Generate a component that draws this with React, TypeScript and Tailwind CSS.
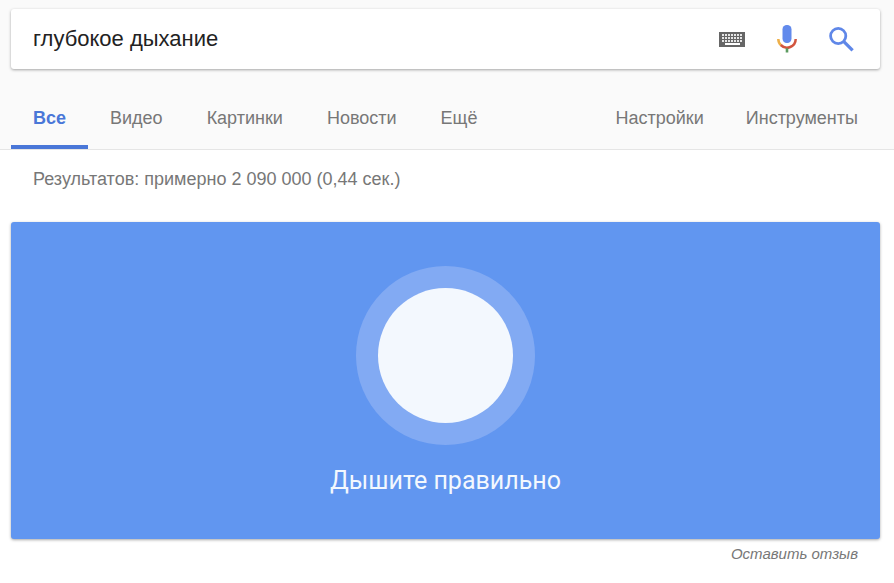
const tabs = ['Все', 'Видео', 'Картинки', 'Новости', 'Ещё']
const tools = ['Настройки', 'Инструменты']

function KeyboardIcon() {
  const columns = [3, 6, 9, 12, 15, 18, 21]

  return (
    <svg width="26" height="15" viewBox="0 0 26 15" aria-hidden="true">
      <rect width="26" height="15" fill="#666666" />
      {[2, 5, 8].map((y) =>
        columns.map((x) => <rect key={`${x}-${y}`} x={x} y={y} width="2" height="2" fill="#e6e6e6" />)
      )}
      <rect x="6" y="11" width="15" height="2" fill="#fff" />
    </svg>
  )
}

function MicIcon() {
  return (
    <svg width="20" height="28" viewBox="0 0 20 28" fill="none" aria-hidden="true">
      <rect x="5.5" y="0" width="9" height="18" rx="4.2" fill="#628aec" />
      <path d="M1.3 14a8.7 8.7 0 0 0 2.8 6.4" stroke="#eeb04a" strokeWidth="2.5" />
      <path d="M3.8 20A8.7 8.7 0 0 0 18.7 14" stroke="#d2553f" strokeWidth="2.5" />
      <path d="M10 23.2V27.5" stroke="#5d9b60" strokeWidth="2.6" />
    </svg>
  )
}

function SearchIcon() {
  return (
    <svg width="25" height="25" viewBox="0 0 25 25" fill="none" stroke="#5f87e8" aria-hidden="true">
      <circle cx="9.2" cy="9" r="7.6" strokeWidth="2.8" />
      <path d="M14.6 14.4l9 9" strokeWidth="3.2" />
    </svg>
  )
}

export default function App() {
  return (
    <div className="min-h-screen bg-white font-['Liberation_Sans',Arial,sans-serif] text-lg leading-6 text-[#777777]">
      <header className="border-b border-[#e5e5e5] bg-[#fafafa] pt-[9px] pr-[14px] pl-[11px]">
        <form
          className="flex h-[60px] items-center rounded-[3px] bg-white pr-[26px] pl-[22px] shadow-[0_1px_3px_rgba(0,0,0,0.35)]"
          onSubmit={(e) => e.preventDefault()}
        >
          <input
            type="text"
            aria-label="Поиск"
            defaultValue="глубокое дыхание"
            className="min-w-0 flex-1 bg-transparent text-[22px] leading-7 text-[#222222] outline-none"
          />
          <div className="flex items-center gap-8">
            <button type="button" aria-label="Экранная клавиатура">
              <KeyboardIcon />
            </button>
            <button type="button" aria-label="Голосовой поиск">
              <MicIcon />
            </button>
            <button type="submit" aria-label="Найти">
              <SearchIcon />
            </button>
          </div>
        </form>

        <nav className="mt-5 flex justify-between">
          <div className="flex">
            {tabs.map((tab, i) => (
              <a
                key={tab}
                href="#"
                className={
                  i === 0
                    ? 'border-b-4 border-[#4a77d8] px-[22px] pt-[17px] pb-[15px] font-bold text-[#4a77d8]'
                    : 'border-b-4 border-transparent px-[22px] pt-[17px] pb-[15px]'
                }
              >
                {tab}
              </a>
            ))}
          </div>
          <div className="flex gap-[42px] pr-[22px]">
            {tools.map((tool) => (
              <button key={tool} type="button" className="border-b-4 border-transparent pt-[17px] pb-[15px]">
                {tool}
              </button>
            ))}
          </div>
        </nav>
      </header>

      <main className="pr-[14px] pl-[11px]">
        <p className="px-[22px] py-[17px]">Результатов: примерно 2 090 000 (0,44 сек.)</p>

        <section className="mt-[14px] flex flex-col items-center rounded-[3px] bg-[#6196f0] pt-11 pb-[42px] shadow-[0_1px_3px_rgba(0,0,0,0.35)]">
          <div className="flex size-[179px] items-center justify-center rounded-full bg-[#82aaf3]">
            <div className="size-[135px] rounded-full bg-[#f3f8fe]" />
          </div>
          <h2 className="mt-5 font-['Roboto',sans-serif] text-[25px] leading-8 text-[#f3f8fe]">Дышите правильно</h2>
        </section>

        <div className="mt-[5px] px-[22px] text-right text-[15px] leading-5 italic">
          <a href="#">Оставить отзыв</a>
        </div>
      </main>
    </div>
  )
}
